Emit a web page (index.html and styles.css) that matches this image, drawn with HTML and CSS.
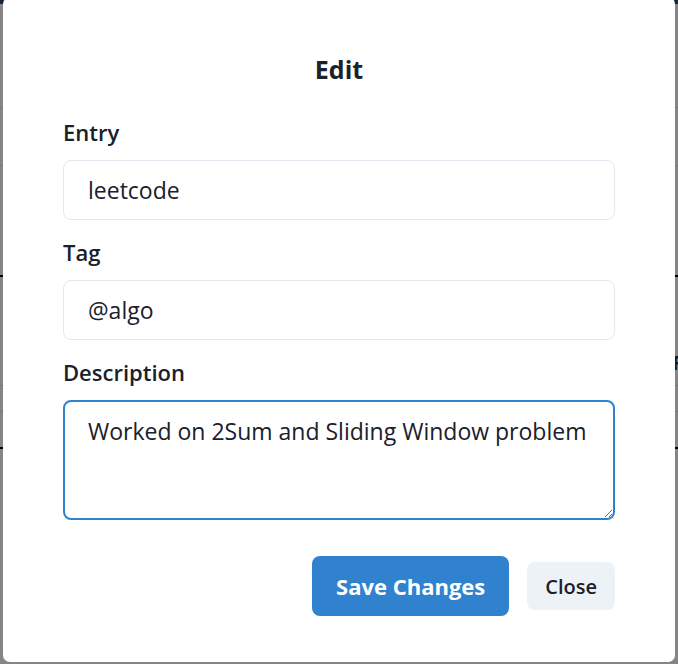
FILE: index.html
```html
<!DOCTYPE html>
<html lang="en">
<head>
<meta charset="utf-8">
<title>Edit</title>
<link rel="stylesheet" href="styles.css">
</head>
<body>
  <div class="page">
    <div class="nav"></div>
    <div class="row row-a"></div>
    <div class="row row-b"></div>
    <div class="row row-c"></div>
    <div class="row row-d"><span class="ghost-text">F</span></div>
    <div class="row row-e"></div>
    <div class="row row-f"></div>
  </div>

  <div class="overlay">
    <section class="modal" role="dialog" aria-labelledby="modal-title">
      <h2 class="title" id="modal-title">Edit</h2>
      <form class="form">
        <label class="field">
          <span class="label">Entry</span>
          <input class="input" type="text" value="leetcode">
        </label>
        <label class="field">
          <span class="label">Tag</span>
          <input class="input" type="text" value="@algo">
        </label>
        <label class="field">
          <span class="label">Description</span>
          <textarea class="textarea">Worked on 2Sum and Sliding Window problem</textarea>
        </label>
      </form>
      <div class="actions">
        <button class="btn btn-primary" type="button">Save Changes</button>
        <button class="btn btn-light" type="button">Close</button>
      </div>
    </section>
  </div>
</body>
</html>
```

FILE: styles.css
```css
* { box-sizing: border-box; }

html, body {
  margin: 0;
  padding: 0;
  width: 678px;
  height: 664px;
  overflow: hidden;
}

body {
  background: #ffffff;
  font-family: "Open Sans", "Noto Sans", sans-serif;
  color: #1a202c;
}

/* page behind the overlay */
.page {
  display: flex;
  flex-direction: column;
}
.nav {
  height: 4px;
  background: #2c4770;
}
.row { border-bottom: 1px solid #e2e8f0; }
.row-a { height: 104px; }
.row-b { height: 58px; }
.row-c { height: 111px; border-bottom: 2px solid #000; }
.row-d { height: 109px; border-bottom: 1px solid #f4d5d5; position: relative; }
.row-e { height: 26px; border-bottom: 1px solid #e9d8dc; }
.row-f { height: 37px; border-bottom: 2px solid #000; }
.ghost-text {
  position: absolute;
  right: -2px;
  top: 74px;
  width: 8px;
  overflow: hidden;
  font-size: 20px;
  line-height: 24px;
  font-weight: 700;
  color: #2a3a5a;
}

.overlay {
  position: fixed;
  inset: 0;
  background: rgba(0, 0, 0, 0.48);
  display: flex;
  align-items: flex-start;
  padding-left: 3px;
}

.modal {
  width: 672px;
  margin-top: -3px;
  background: #ffffff;
  border-radius: 7px;
  padding: 56px 60px 46px;
  display: flex;
  flex-direction: column;
}

.title {
  margin: 0;
  text-align: center;
  font-size: 25px;
  line-height: 32px;
  font-weight: 700;
  color: #1a202c;
}

.form {
  display: flex;
  flex-direction: column;
  margin-top: 32px;
  gap: 17px;
}

.field {
  display: flex;
  flex-direction: column;
  gap: 13px;
}

.label {
  font-size: 22px;
  line-height: 30px;
  font-weight: 600;
  color: #1a202c;
}

.input,
.textarea {
  font-family: "Open Sans", "Noto Sans", sans-serif;
  font-size: 23px;
  color: #1a202c;
  width: 100%;
  background: #fff;
  border-radius: 8px;
  outline: none;
  margin: 0;
}

.input {
  height: 60px;
  border: 1px solid #e2e8f0;
  padding: 0 24px;
}

.textarea {
  height: 120px;
  border: 2px solid #3182ce;
  padding: 12px 23px;
  line-height: 1.5;
  resize: vertical;
  display: block;
}

.actions {
  margin-top: 36px;
  display: flex;
  justify-content: flex-end;
  align-items: center;
  gap: 18px;
}

.btn {
  font-family: "Open Sans", "Noto Sans", sans-serif;
  border: none;
  border-radius: 8px;
  cursor: pointer;
  display: inline-flex;
  align-items: center;
  justify-content: center;
}

.btn-primary {
  height: 60px;
  padding: 0 24px;
  background: #3182ce;
  color: #ffffff;
  font-size: 22px;
  font-weight: 700;
}

.btn-light {
  height: 48px;
  padding: 0 18px;
  background: #edf2f7;
  color: #1a202c;
  font-size: 20px;
  font-weight: 600;
}
```
